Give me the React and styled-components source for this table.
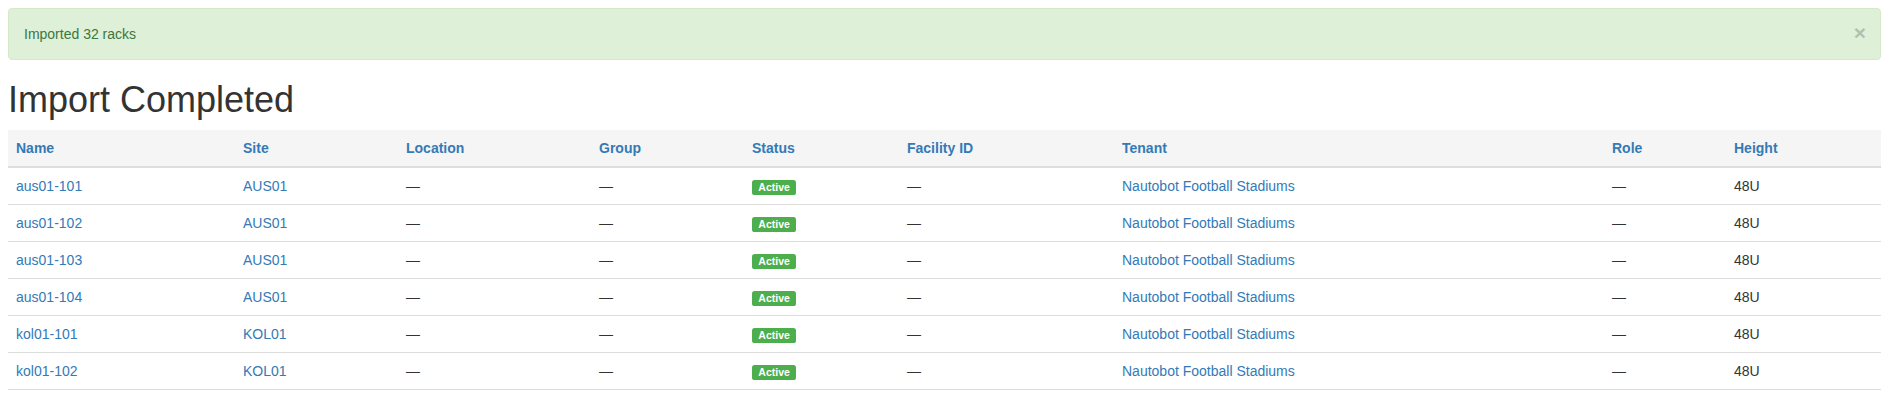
import React from 'react'
import styled, { createGlobalStyle } from 'styled-components'

const columns = [
    { label: 'Name', width: 227 },
    { label: 'Site', width: 163 },
    { label: 'Location', width: 193 },
    { label: 'Group', width: 153 },
    { label: 'Status', width: 155 },
    { label: 'Facility ID', width: 215 },
    { label: 'Tenant', width: 490 },
    { label: 'Role', width: 122 },
    { label: 'Height' },
]

const racks = [
    { name: 'aus01-101', site: 'AUS01' },
    { name: 'aus01-102', site: 'AUS01' },
    { name: 'aus01-103', site: 'AUS01' },
    { name: 'aus01-104', site: 'AUS01' },
    { name: 'kol01-101', site: 'KOL01' },
    { name: 'kol01-102', site: 'KOL01' },
]

function App() {
    return (
        <>
            <GlobalStyle />
            <Page>
                <Alert>
                    Imported 32 racks
                    <Close type="button">&times;</Close>
                </Alert>
                <Title>Import Completed</Title>
                <Table>
                    <thead>
                        <tr>
                            {columns.map((c) => (
                                <Th key={c.label} $width={c.width}>
                                    <Link href="#">{c.label}</Link>
                                </Th>
                            ))}
                        </tr>
                    </thead>
                    <tbody>
                        {racks.map((r) => (
                            <tr key={r.name}>
                                <Td><Link href="#">{r.name}</Link></Td>
                                <Td><Link href="#">{r.site}</Link></Td>
                                <Td>&mdash;</Td>
                                <Td>&mdash;</Td>
                                <Td><Label>Active</Label></Td>
                                <Td>&mdash;</Td>
                                <Td><Link href="#">Nautobot Football Stadiums</Link></Td>
                                <Td>&mdash;</Td>
                                <Td>48U</Td>
                            </tr>
                        ))}
                    </tbody>
                </Table>
            </Page>
        </>
    )
}

const GlobalStyle = createGlobalStyle`
    * {
        box-sizing: border-box;
    }

    body {
        margin: 0;
        background: #ffffff;
        font-family: "Liberation Sans", Arial, sans-serif;
        font-size: 14px;
        line-height: 20px;
        color: #333333;
    }
`

const Page = styled.div`
    padding: 8px 10px 0 8px;
`

const Alert = styled.div`
    position: relative;
    padding: 15px 35px 15px 15px;
    margin-bottom: 20px;
    border: 1px solid #d6e9c6;
    border-radius: 4px;
    background-color: #dff0d8;
    color: #3c763d;
`

const Close = styled.button`
    position: absolute;
    top: 13px;
    right: 14px;
    padding: 0;
    border: 0;
    background: transparent;
    font-family: "Liberation Sans", Arial, sans-serif;
    font-size: 21px;
    font-weight: 700;
    line-height: 1;
    color: #000000;
    opacity: 0.2;
    cursor: pointer;
`

const Title = styled.h1`
    margin: 20px 0 10px 0;
    font-size: 36px;
    font-weight: 500;
    line-height: 1.1;
    color: #333333;
`

const Table = styled.table`
    width: 100%;
    table-layout: fixed;
    border-collapse: collapse;
    border-spacing: 0;
`

const Th = styled.th`
    width: ${(p) => (p.$width ? `${p.$width}px` : 'auto')};
    padding: 8px;
    text-align: left;
    font-weight: 700;
    background-color: #f5f5f5;
    border-bottom: 2px solid #dddddd;
    white-space: nowrap;
`

const Td = styled.td`
    padding: 8px;
    vertical-align: top;
    border-bottom: 1px solid #dddddd;
    white-space: nowrap;
`

const Link = styled.a`
    color: #337ab7;
    text-decoration: none;
`

const Label = styled.span`
    display: inline-block;
    padding: 0.2em 0.6em 0.3em;
    border-radius: 0.25em;
    background-color: #4cae4c;
    color: #ffffff;
    font-size: 75%;
    font-weight: 700;
    line-height: 1;
    vertical-align: baseline;
`

export default App
